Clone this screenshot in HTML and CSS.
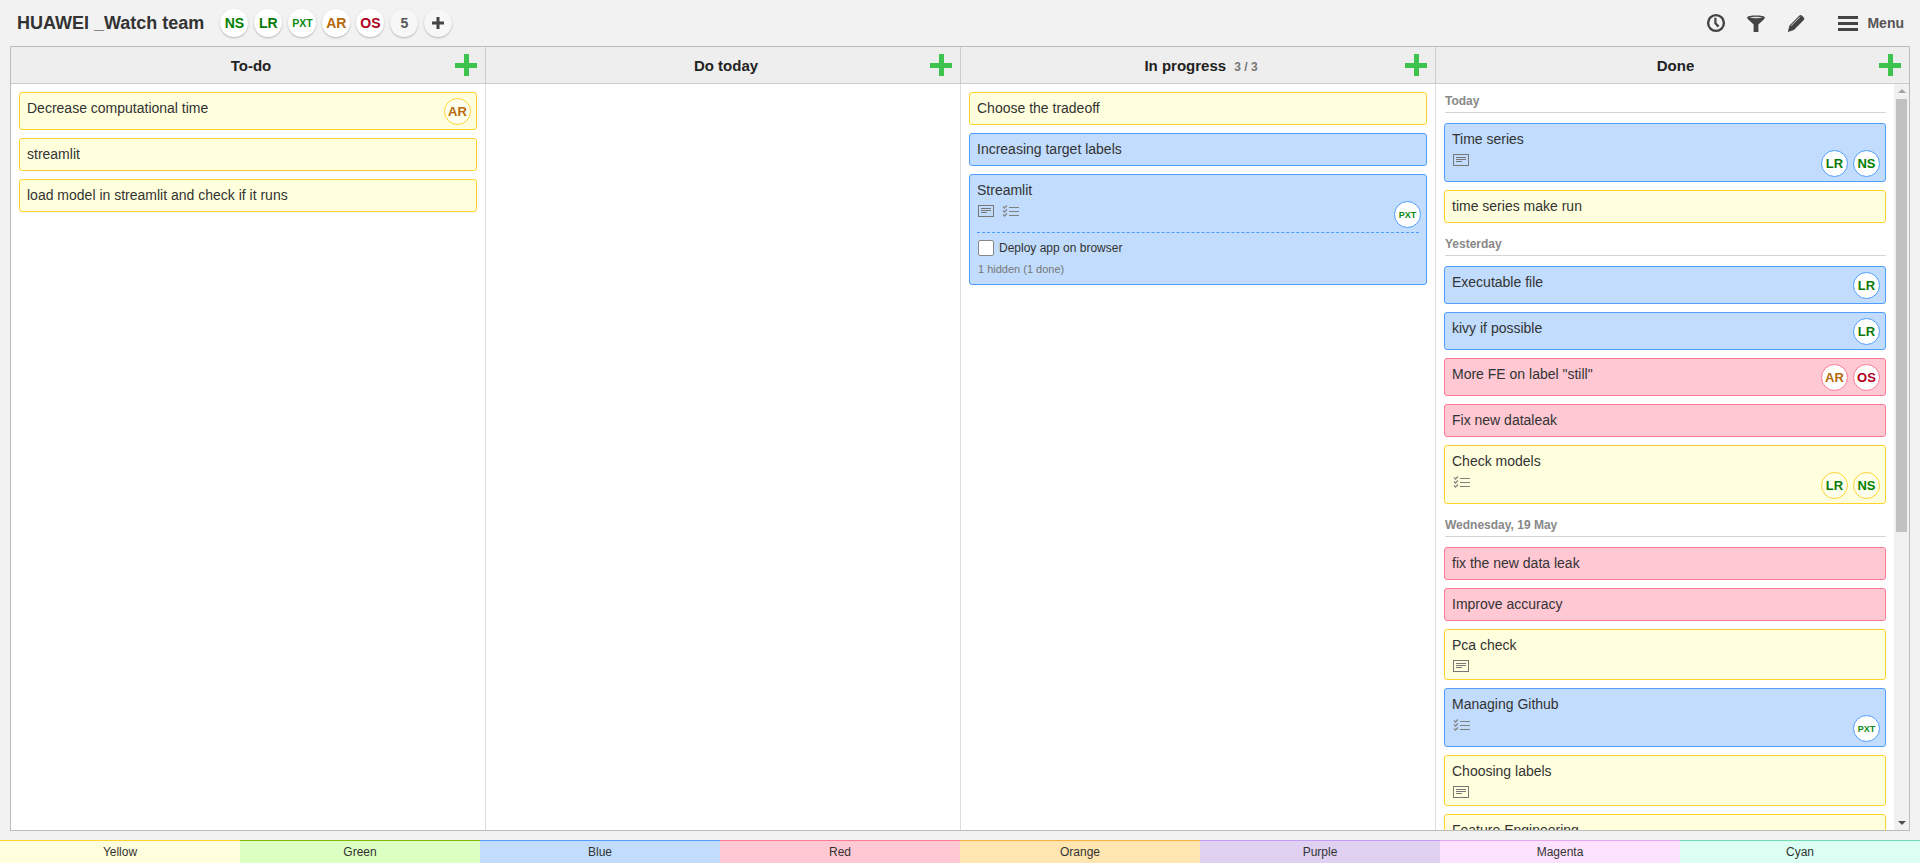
FILE: index.html
```html
<!DOCTYPE html>
<html>
<head>
    <meta charset="UTF-8">
    <title>HUAWEI _Watch team</title>
    <link rel="stylesheet" href="styles.css">
</head>
<body>
    <svg class="sprites" width="0" height="0">
        <symbol id="icon-note" viewBox="0 0 16 12">
            <rect x="0.5" y="0.5" width="15" height="11" fill="none" stroke="#777"/>
            <path d="M3 3.5h10M3 5.5h10M3 7.5h6" stroke="#777" fill="none"/>
        </symbol>
        <symbol id="icon-checks" viewBox="0 0 17 12">
            <path d="M1 1.5l1.5 1.5L5 0.5M1 5.5l1.5 1.5L5 4.5M1 9.5l1.5 1.5L5 8.5" stroke="#888" stroke-width="1.4" fill="none"/>
            <path d="M7 2.5h10M7 6.5h10M7 10.5h10" stroke="#808080" fill="none"/>
        </symbol>
    </svg>

    <div class="topbar">
        <h1 class="board-title">HUAWEI _Watch team</h1>
        <div class="team">
            <span class="avatar avatar-top c-ns">NS</span>
            <span class="avatar avatar-top c-lr">LR</span>
            <span class="avatar avatar-top small c-pxt">PXT</span>
            <span class="avatar avatar-top c-ar">AR</span>
            <span class="avatar avatar-top c-os">OS</span>
            <span class="avatar avatar-top muted">5</span>
            <span class="avatar avatar-top muted">
                <svg width="12" height="12" viewBox="0 0 12 12"><path d="M6 0v12M0 6h12" stroke="#444" stroke-width="3"/></svg>
            </span>
        </div>
        <div class="tools">
            <svg class="tool" width="20" height="20" viewBox="0 0 20 20">
                <circle cx="10" cy="10" r="7.9" fill="none" stroke="#444" stroke-width="2.4"/>
                <path d="M9.4 4.8v5.6l3.2 3.2" fill="none" stroke="#444" stroke-width="2.2"/>
            </svg>
            <svg class="tool" width="20" height="20" viewBox="0 0 20 20">
                <path d="M1.2 4.4C1.2 1.8 18.8 1.8 18.8 4.4c0 1-.7 1.7-1.6 2.6L12.4 11.6V19H7.6V11.6L2.8 7C1.9 6.1 1.2 5.4 1.2 4.4z" fill="#444"/>
                <path d="M3.6 4.6c2.2-1 10.6-1 12.8 0-2.2.9-10.6.9-12.8 0z" fill="#ddd"/>
            </svg>
            <svg class="tool" width="20" height="20" viewBox="0 0 20 20">
                <path d="M1.8 19l1.7-6.4L13.4 2.6a1.7 1.7 0 0 1 2.4 0l2 2a1.7 1.7 0 0 1 0 2.4L7.9 17z" fill="#444"/>
                <path d="M5 12.8l9-9" stroke="#f2f2f2" stroke-width="0.8" fill="none"/>
            </svg>
            <div class="menu-btn">
                <span class="burger"><i></i><i></i><i></i></span>
                <span class="menu-label">Menu</span>
            </div>
        </div>
    </div>

    <div class="board">
        <section class="column">
            <header class="col-head">
                <span class="col-title">To-do</span>
                <span class="col-add"></span>
            </header>
            <div class="col-list">
                <div class="card yellow">
                    <div class="card-top">
                        <div class="card-main"><div class="card-title">Decrease computational time</div></div>
                        <div class="members"><span class="avatar c-ar">AR</span></div>
                    </div>
                </div>
                <div class="card yellow"><div class="card-title">streamlit</div></div>
                <div class="card yellow"><div class="card-title">load model in streamlit and check if it runs</div></div>
            </div>
        </section>

        <section class="column">
            <header class="col-head">
                <span class="col-title">Do today</span>
                <span class="col-add"></span>
            </header>
            <div class="col-list"></div>
        </section>

        <section class="column">
            <header class="col-head">
                <span class="col-title">In progress <span class="col-count">3 / 3</span></span>
                <span class="col-add"></span>
            </header>
            <div class="col-list">
                <div class="card yellow"><div class="card-title">Choose the tradeoff</div></div>
                <div class="card blue"><div class="card-title">Increasing target labels</div></div>
                <div class="card blue">
                    <div class="card-top has-icons">
                        <div class="card-main">
                            <div class="card-title">Streamlit</div>
                            <div class="card-icons">
                                <svg class="ico-note"><use href="#icon-note"/></svg>
                                <svg class="ico-checks"><use href="#icon-checks"/></svg>
                            </div>
                        </div>
                        <div class="members"><span class="avatar small c-pxt">PXT</span></div>
                    </div>
                    <div class="subtasks">
                        <label class="subtask"><span class="checkbox"></span>Deploy app on browser</label>
                        <div class="subtask-hidden">1 hidden (1 done)</div>
                    </div>
                </div>
            </div>
        </section>

        <section class="column">
            <header class="col-head">
                <span class="col-title">Done</span>
                <span class="col-add"></span>
            </header>
            <div class="col-scroll">
                <div class="col-list done-list">
                    <div class="day-label">Today</div>
                    <div class="card blue">
                        <div class="card-top has-icons">
                            <div class="card-main">
                                <div class="card-title">Time series</div>
                                <div class="card-icons"><svg class="ico-note"><use href="#icon-note"/></svg></div>
                            </div>
                            <div class="members"><span class="avatar c-lr">LR</span><span class="avatar c-ns">NS</span></div>
                        </div>
                    </div>
                    <div class="card yellow"><div class="card-title">time series make run</div></div>

                    <div class="day-label">Yesterday</div>
                    <div class="card blue">
                        <div class="card-top">
                            <div class="card-main"><div class="card-title">Executable file</div></div>
                            <div class="members"><span class="avatar c-lr">LR</span></div>
                        </div>
                    </div>
                    <div class="card blue">
                        <div class="card-top">
                            <div class="card-main"><div class="card-title">kivy if possible</div></div>
                            <div class="members"><span class="avatar c-lr">LR</span></div>
                        </div>
                    </div>
                    <div class="card red">
                        <div class="card-top">
                            <div class="card-main"><div class="card-title">More FE on label "still"</div></div>
                            <div class="members"><span class="avatar c-ar">AR</span><span class="avatar c-os">OS</span></div>
                        </div>
                    </div>
                    <div class="card red"><div class="card-title">Fix new dataleak</div></div>
                    <div class="card yellow">
                        <div class="card-top has-icons">
                            <div class="card-main">
                                <div class="card-title">Check models</div>
                                <div class="card-icons"><svg class="ico-checks"><use href="#icon-checks"/></svg></div>
                            </div>
                            <div class="members"><span class="avatar c-lr">LR</span><span class="avatar c-ns">NS</span></div>
                        </div>
                    </div>

                    <div class="day-label">Wednesday, 19 May</div>
                    <div class="card red"><div class="card-title">fix the new data leak</div></div>
                    <div class="card red"><div class="card-title">Improve accuracy</div></div>
                    <div class="card yellow">
                        <div class="card-title">Pca check</div>
                        <div class="card-icons"><svg class="ico-note"><use href="#icon-note"/></svg></div>
                    </div>
                    <div class="card blue">
                        <div class="card-top has-icons">
                            <div class="card-main">
                                <div class="card-title">Managing Github</div>
                                <div class="card-icons"><svg class="ico-checks"><use href="#icon-checks"/></svg></div>
                            </div>
                            <div class="members"><span class="avatar small c-pxt">PXT</span></div>
                        </div>
                    </div>
                    <div class="card yellow">
                        <div class="card-title">Choosing labels</div>
                        <div class="card-icons"><svg class="ico-note"><use href="#icon-note"/></svg></div>
                    </div>
                    <div class="card yellow"><div class="card-title">Feature Engineering</div></div>
                </div>
                <div class="scrollbar">
                    <span class="arrow arrow-up"></span>
                    <span class="thumb"></span>
                    <span class="arrow arrow-down"></span>
                </div>
            </div>
        </section>
    </div>

    <div class="palette">
        <div class="swatch yellow">Yellow</div>
        <div class="swatch green">Green</div>
        <div class="swatch blue">Blue</div>
        <div class="swatch red">Red</div>
        <div class="swatch orange">Orange</div>
        <div class="swatch purple">Purple</div>
        <div class="swatch magenta">Magenta</div>
        <div class="swatch cyan">Cyan</div>
    </div>
</body>
</html>
```

FILE: styles.css
```css
html, body {
    height: 100%;
}
body {
    margin: 0;
    background: #f2f2f2;
    color: #333;
    font-family: "Liberation Sans", Arial, sans-serif;
    font-size: 14px;
    display: flex;
    flex-direction: column;
    overflow: hidden;
}
.sprites {
    display: none;
}

/* top bar */
.topbar {
    height: 46px;
    flex: none;
    display: flex;
    align-items: center;
    padding: 0 16px 0 17px;
    box-sizing: border-box;
}
.board-title {
    margin: 0;
    font-size: 18px;
    font-weight: bold;
    color: #333;
}
.team {
    display: flex;
    gap: 6px;
    margin-left: 16px;
}
.tools {
    margin-left: auto;
    display: flex;
    align-items: center;
    gap: 20px;
}
.tool {
    display: block;
}
.menu-btn {
    display: flex;
    align-items: center;
    gap: 9px;
    margin-left: 12px;
}
.burger {
    display: flex;
    flex-direction: column;
    gap: 3px;
    width: 20px;
}
.burger i {
    display: block;
    height: 3px;
    background: #444;
}
.menu-label {
    font-size: 14px;
    font-weight: bold;
    color: #555;
}

/* avatars */
.avatar {
    width: 27px;
    height: 27px;
    box-sizing: border-box;
    border-radius: 50%;
    border: 1px solid #ccc;
    background: #fff;
    display: flex;
    align-items: center;
    justify-content: center;
    font-size: 13px;
    font-weight: bold;
    flex: none;
}
.avatar.small {
    font-size: 9px;
}
.avatar-top {
    width: 28px;
    height: 28px;
    border: none;
    font-size: 14px;
    box-shadow: 0 1px 2px rgba(0, 0, 0, 0.25);
}
.avatar-top.small {
    font-size: 10.5px;
}
.avatar.muted {
    background: #f7f7f7;
    color: #555;
}
.c-ns { color: #008000; }
.c-lr { color: #0a7a0a; }
.c-pxt { color: #0b8a12; }
.c-ar { color: #b5690c; }
.c-os { color: #b00020; }

/* board */
.board {
    height: 785px;
    flex: none;
    margin: 0 10px;
    box-sizing: border-box;
    border: 1px solid #bbb;
    background: #fff;
    display: grid;
    grid-template-columns: 475px 475px 475px 1fr;
}
.column {
    display: flex;
    flex-direction: column;
    border-right: 1px solid #ddd;
    min-height: 0;
}
.column:last-child {
    border-right: none;
}
.col-head {
    height: 37px;
    flex: none;
    box-sizing: border-box;
    background: #eee;
    border-bottom: 1px solid #ccc;
    border-right: 1px solid #ccc;
    display: flex;
    align-items: center;
    padding-right: 8px;
    margin-right: -1px;
}
.col-title {
    flex: 1;
    text-align: center;
    padding-left: 36px;
    font-size: 15px;
    font-weight: bold;
    color: #222;
}
.col-count {
    font-size: 12px;
    color: #777;
    margin-left: 4px;
}
.col-add {
    width: 22px;
    height: 22px;
    flex: none;
    background:
        linear-gradient(#3ec44e, #3ec44e) center / 100% 5px no-repeat,
        linear-gradient(#3ec44e, #3ec44e) center / 5px 100% no-repeat;
}
.column:last-child .col-head {
    margin-right: 0;
    border-right: none;
}
.col-list {
    padding: 8px;
}
.col-scroll {
    flex: 1;
    min-height: 0;
    display: flex;
    overflow: hidden;
}
.done-list {
    flex: 1;
    min-width: 0;
    padding-top: 4px;
}
.day-label {
    height: 25px;
    box-sizing: border-box;
    margin: 0 0 10px 1px;
    border-bottom: 1px solid #d4d4d4;
    font-size: 12px;
    font-weight: bold;
    color: #888;
    line-height: 17px;
    padding-top: 5px;
}

/* fake scrollbar, the real one does not show in the capture */
.scrollbar {
    width: 15px;
    flex: none;
    background: #f1f1f1;
    display: flex;
    flex-direction: column;
    align-items: center;
}
.arrow {
    display: block;
    width: 0;
    height: 0;
    flex: none;
    border-left: 4px solid transparent;
    border-right: 4px solid transparent;
}
.arrow-up {
    margin: 5px 0 6px;
    border-bottom: 4px solid #a3a3a3;
}
.arrow-down {
    margin: auto 0 5px;
    border-top: 4px solid #505050;
}
.thumb {
    display: block;
    width: 11px;
    height: 433px;
    flex: none;
    background: #c1c1c1;
}

/* cards */
.card {
    border: 1px solid #ccc;
    border-radius: 3px;
    padding: 7px;
    margin-bottom: 8px;
    box-sizing: border-box;
    color: #333;
}
.card-top {
    display: flex;
}
.card-main {
    flex: 1;
    min-width: 0;
}
.card-title {
    font-size: 14px;
    line-height: 17px;
}
.card-icons {
    display: flex;
    align-items: flex-start;
    gap: 8px;
    height: 18px;
    padding-top: 6px;
    box-sizing: border-box;
    margin-left: 1px;
}
.ico-note {
    width: 16px;
    height: 12px;
}
.ico-checks {
    width: 17px;
    height: 12px;
}
.members {
    display: flex;
    gap: 5px;
    margin: -2px -2px -3px 0;
}
.has-icons .members {
    margin-top: 19px;
}
.subtasks {
    margin-top: 7px;
    border-top: 1px dashed #4a9cff;
    padding-top: 7px;
}
.subtask {
    display: flex;
    align-items: center;
    gap: 5px;
    height: 16px;
    font-size: 12px;
    margin-left: 1px;
}
.checkbox {
    width: 16px;
    height: 16px;
    box-sizing: border-box;
    background: #fff;
    border: 1px solid #888;
    border-radius: 2px;
}
.subtask-hidden {
    margin: 6px 0 0 1px;
    font-size: 11px;
    line-height: 15px;
    color: #777;
}

/* palette */
.palette {
    margin-top: 9px;
    height: 23px;
    flex: none;
    display: grid;
    grid-template-columns: repeat(8, 1fr);
}
.swatch {
    border-top: 1px solid #ccc;
    text-align: center;
    font-size: 12px;
    line-height: 22px;
    color: #333;
}

/* colours, shared by cards and the palette */
.yellow { background: #ffffdd; border-color: #ffd22e; }
.green { background: #dcffc2; border-color: #7dbb00; }
.blue { background: #c1dcfd; border-color: #4f9dff; }
.red { background: #ffc8d3; border-color: #ff7a92; }
.orange { background: #ffe5b0; border-color: #ffb03a; }
.purple { background: #e0d1f2; border-color: #c39cf5; }
.magenta { background: #fde2ff; border-color: #e3a6ec; }
.cyan { background: #dbfff2; border-color: #6fdcb4; }
.card.yellow .avatar { background: #ffffee; border-color: #ffd22e; }
.card.blue .avatar { border-color: #4f9dff; }
.card.red .avatar { border-color: #ff7a92; }
```
